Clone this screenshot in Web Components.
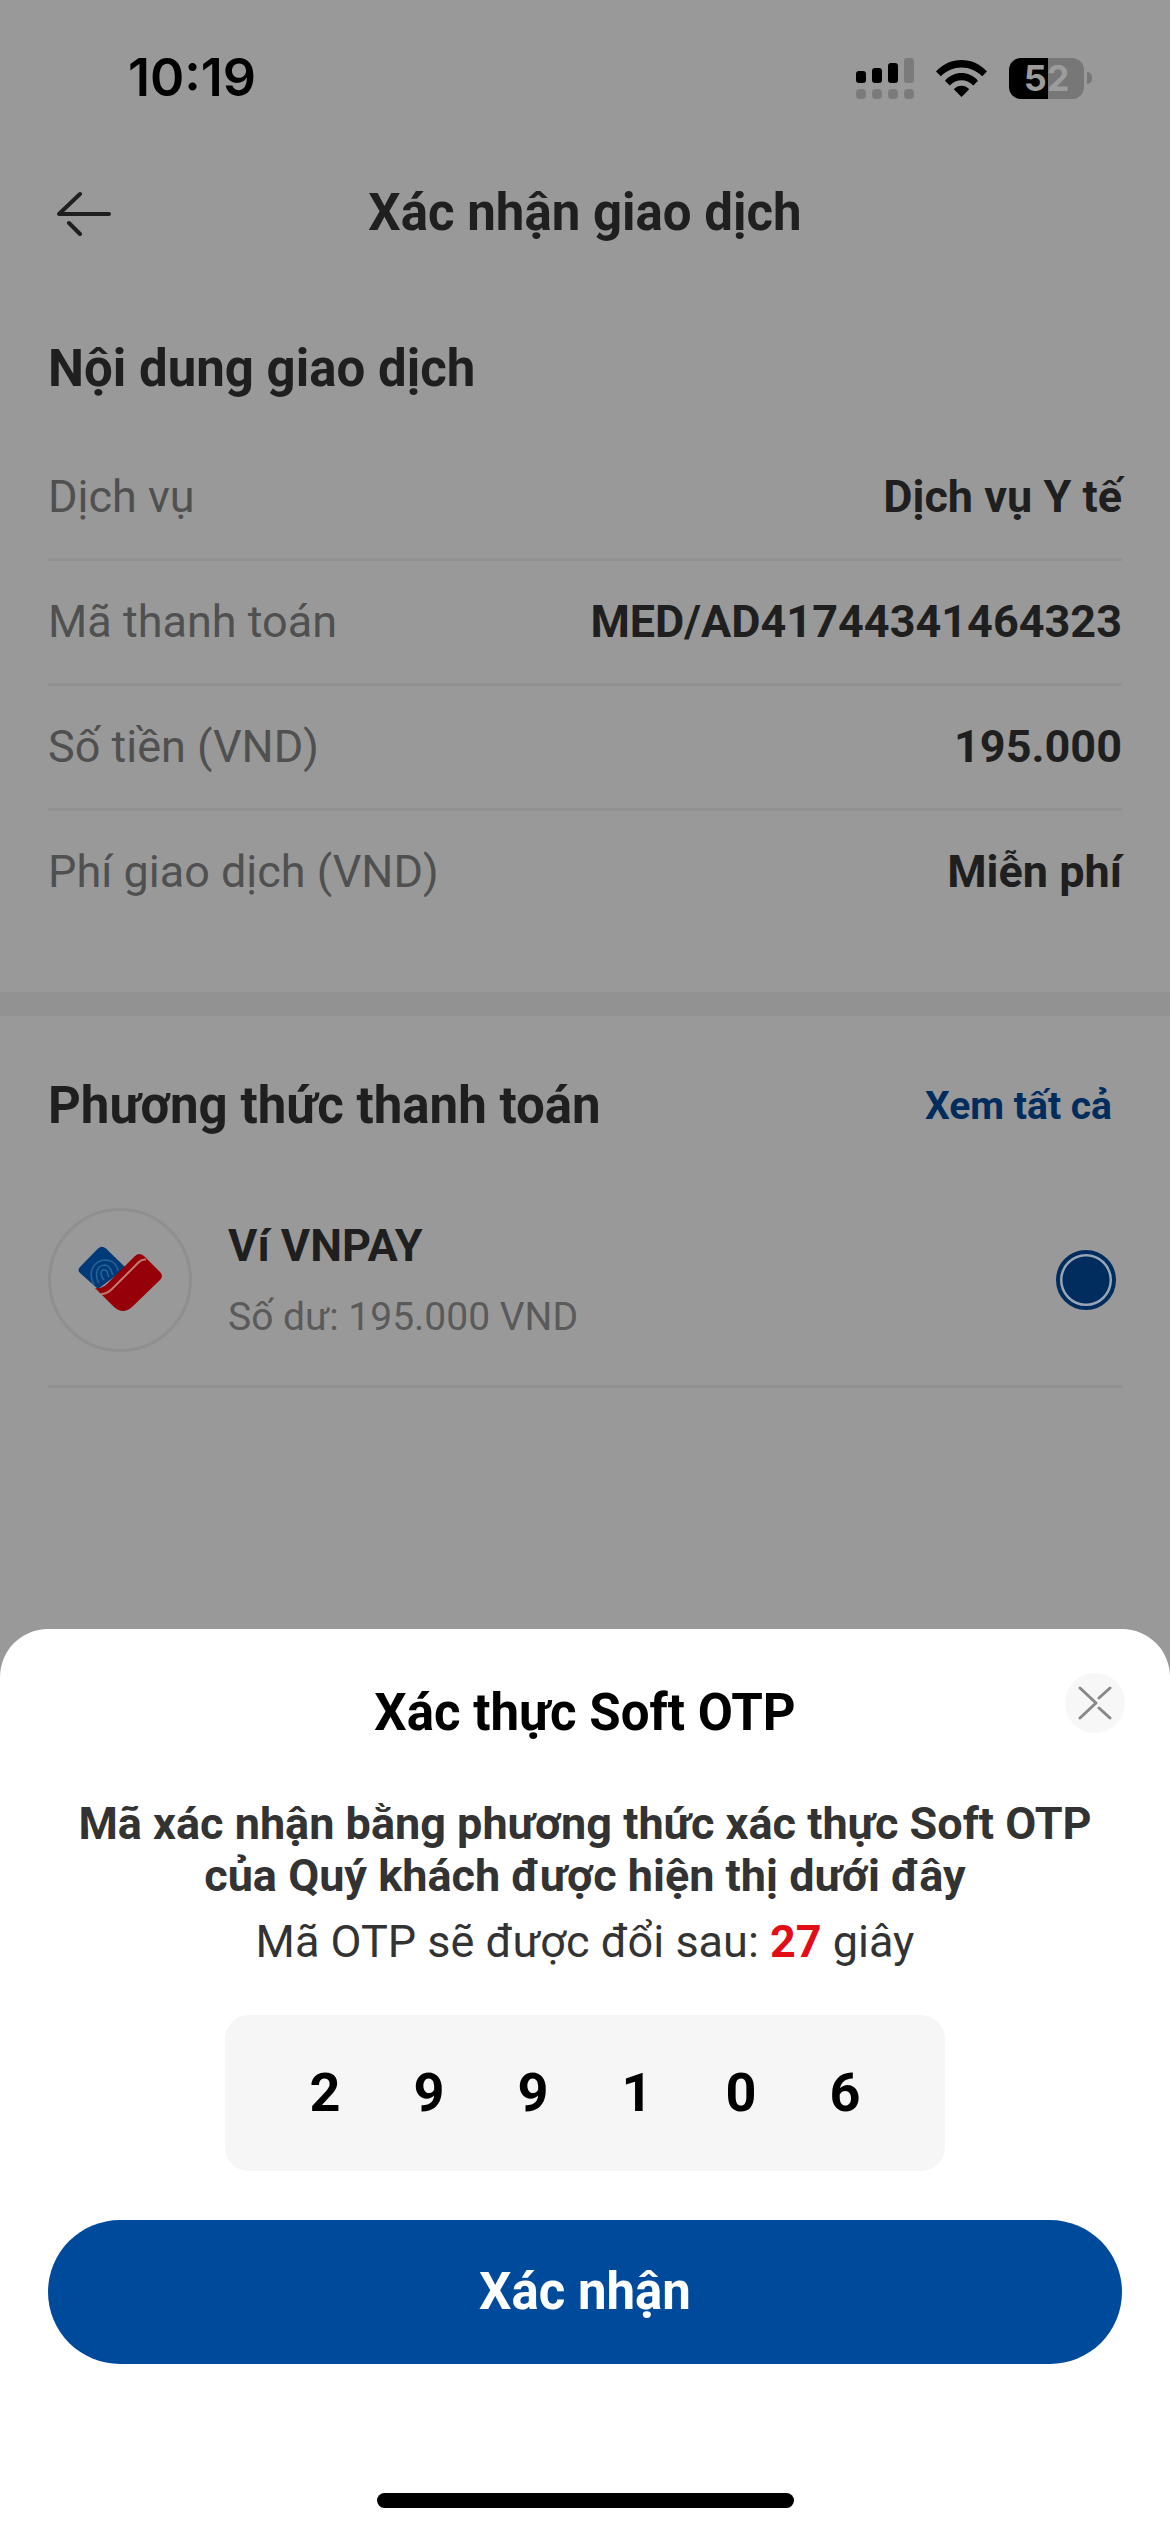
<!DOCTYPE html>
<html lang="vi">
<head>
<meta charset="utf-8">
<meta name="viewport" content="width=device-width, initial-scale=1">
<title>Xác nhận giao dịch</title>
<style>
  :root {
    --page: #999999;
    --ink: #1f1f1f;
    --muted: #505050;
    --line: #919191;
    --navy: #002c5e;
    --blue: #004a9c;
    --gutter: 48px;
  }
  body { margin: 0; background: #fff; font-family: Roboto, "Noto Sans", sans-serif; }
</style>
</head>
<body>
<payment-screen>
  <status-bar slot="top" time="10:19" battery="52"></status-bar>
  <nav-header slot="top">Xác nhận giao dịch</nav-header>
  <detail-section heading="Nội dung giao dịch">
    <detail-row label="Dịch vụ">Dịch vụ Y tế</detail-row>
    <detail-row label="Mã thanh toán">MED/AD41744341464323</detail-row>
    <detail-row label="Số tiền (VND)">195.000</detail-row>
    <detail-row label="Phí giao dịch (VND)" last>Miễn phí</detail-row>
  </detail-section>
  <payment-methods heading="Phương thức thanh toán" link="Xem tất cả">
    <wallet-option name="Ví VNPAY">Số dư: 195.000 VND</wallet-option>
  </payment-methods>
  <otp-sheet slot="sheet" heading="Xác thực Soft OTP" seconds="27" action="Xác nhận">
    Mã xác nhận bằng phương thức xác thực Soft OTP của Quý khách được hiện thị dưới đây
    <otp-code slot="code" value="299106"></otp-code>
  </otp-sheet>
</payment-screen>

<script>
class BaseElement extends HTMLElement {
  connectedCallback() {
    if (this.shadowRoot) return;
    this.attachShadow({ mode: "open" }).innerHTML =
      `<style>:host{display:block;box-sizing:border-box}*{box-sizing:border-box}h1,h2,p{margin:0}${this.css()}</style>${this.html()}`;
  }
  attr(name) { return this.getAttribute(name) || ""; }
}

customElements.define("payment-screen", class extends BaseElement {
  css() { return `
    :host{display:flex;flex-direction:column;min-height:100vh;background:var(--page)}
    main{flex:1}`; }
  html() { return `<slot name="top"></slot><main><slot></slot></main><slot name="sheet"></slot>`; }
});

customElements.define("status-bar", class extends BaseElement {
  css() { return `
    :host{display:flex;align-items:center;justify-content:space-between;height:156px;padding:0 78px 0 128px;font-family:Inter,Roboto,sans-serif;color:#000}
    time{font-size:52px;line-height:60px;font-weight:600}
    .icons{display:flex;align-items:center;gap:22px}
    svg{display:block}
    .power{display:flex;align-items:center;gap:3px}
    .battery{width:75px;height:41px;border-radius:12px;background:linear-gradient(90deg,#000 52%,#777 52%);display:flex;align-items:center;justify-content:center;font-size:36px;line-height:40px;font-weight:700;color:#9c9c9c}
    .nub{width:5px;height:12px;border-radius:0 5px 5px 0;background:#777}`; }
  html() { return `
    <time>${this.attr("time")}</time>
    <div class="icons">
      <svg width="58" height="41" viewBox="0 0 58 41" aria-hidden="true">
        <g fill="#000"><rect x="0" y="13" width="10" height="12" rx="3"/><rect x="16" y="10" width="10" height="15" rx="3"/><rect x="32" y="5" width="10" height="20" rx="3"/></g>
        <g fill="#7b7b7b"><rect x="48" y="0" width="10" height="25" rx="3"/><rect x="0" y="31" width="10" height="10" rx="4"/><rect x="16" y="31" width="10" height="10" rx="4"/><rect x="32" y="31" width="10" height="10" rx="4"/><rect x="48" y="31" width="10" height="10" rx="4"/></g>
      </svg>
      <svg width="51" height="37" viewBox="0 0 51 37" aria-hidden="true">
        <path d="M0 11.5C14-3.8 37-3.8 51 11.5L46.200 16.300C34.500 4.500 16.500 4.500 4.800 16.300Z"/>
        <path d="M9 20.700C18 10.500 33 10.500 42 20.700L37.300 25.400C30.500 18.500 20.500 18.500 13.700 25.400Z"/>
        <path d="M17.800 29.300C22 24.700 29 24.700 33.200 29.300L25.500 37Z"/>
      </svg>
      <div class="power"><div class="battery">${this.attr("battery")}</div><div class="nub"></div></div>
    </div>`; }
});

customElements.define("nav-header", class extends BaseElement {
  css() { return `
    :host{display:grid;grid-template-columns:72px 1fr 72px;align-items:center;padding:12px var(--gutter) 0;height:102px;color:var(--ink)}
    button{border:0;background:none;padding:0 0 0 8px;height:90px;color:inherit;display:flex;align-items:center}
    h1{font-size:51px;line-height:60px;font-weight:700;text-align:center}`; }
  html() { return `
    <button aria-label="Quay lại">
      <svg width="56" height="46" viewBox="0 0 56 46" fill="none" stroke="currentColor" stroke-width="4" stroke-linecap="round" stroke-linejoin="round"><path d="M53 24H3L24 4M13 33L24 44"/></svg>
    </button>
    <h1><slot></slot></h1>`; }
});

customElements.define("detail-section", class extends BaseElement {
  css() { return `
    :host{padding:81px var(--gutter) 56px;border-bottom:24px solid #929292}
    h2{font-size:51px;line-height:60px;font-weight:700;color:var(--ink);margin-bottom:37px}`; }
  html() { return `<h2>${this.attr("heading")}</h2><slot></slot>`; }
});

customElements.define("detail-row", class extends BaseElement {
  css() { return `
    :host{display:flex;align-items:center;justify-content:space-between;height:125px;border-bottom:3px solid var(--line);font-size:45px;line-height:54px}
    :host([last]){border-color:transparent}
    span{color:var(--muted)}
    strong{font-weight:700;color:var(--ink)}`; }
  html() { return `<span>${this.attr("label")}</span><strong><slot></slot></strong>`; }
});

customElements.define("payment-methods", class extends BaseElement {
  css() { return `
    :host{padding:60px var(--gutter) 0}
    header{display:flex;align-items:center;justify-content:space-between;padding-right:10px;margin-bottom:72px}
    h2{font-size:51px;line-height:60px;font-weight:700;color:var(--ink)}
    a{font-size:39px;line-height:48px;font-weight:700;color:var(--navy);text-decoration:none}`; }
  html() { return `<header><h2>${this.attr("heading")}</h2><a href="#">${this.attr("link")}</a></header><slot></slot>`; }
});

customElements.define("wallet-option", class extends BaseElement {
  css() { return `
    :host{border-bottom:3px solid var(--line);padding-bottom:33px}
    label{display:flex;align-items:center;gap:36px;padding-right:6px}
    .logo{width:144px;height:144px;border:3px solid #8f8f8f;border-radius:50%;display:flex;align-items:center;justify-content:center}
    .text{flex:1;display:flex;flex-direction:column;gap:14px}
    strong{font-size:45px;line-height:60px;font-weight:700;color:var(--ink)}
    .text span{font-size:39px;line-height:54px;color:#5a5a5a}
    input{appearance:none;margin:0;width:60px;height:60px;border:4px solid var(--navy);border-radius:50%;background:radial-gradient(circle,var(--navy) 23px,#9aa6b6 24px)}`; }
  html() { return `
    <label>
      <span class="logo">
        <svg width="84" height="68" viewBox="0 0 84 68" aria-hidden="true">
          <path d="M20 2.500Q24 -1 28 2.500L48 22L20 43L2 27Q-1 24 2 21Z" fill="#003a78"/>
          <g fill="none" stroke="#286496" stroke-width="1.500"><path d="M16 39C10 28 14 15 27 14C34 14 39 18 40 25"/><path d="M21 37C16 29 19 19 27 19C34 20 33 27 35 29"/><path d="M26 34C21 28 23 23 27 24C31 25 29 29 31 31"/></g>
          <path d="M57 10Q61 6 66 10L82 26Q86 30 82 34L54 61Q45 69 36 61L17 42Q24 43 29 38Z" fill="#960008"/>
          <path d="M68 13.500Q64 13 61 16L34 43Q29 48 23 48" fill="none" stroke="#c17b70" stroke-width="2"/>
        </svg>
      </span>
      <span class="text"><strong>${this.attr("name")}</strong><span><slot></slot></span></span>
      <input type="radio" name="method" checked>
    </label>`; }
});

customElements.define("otp-code", class extends BaseElement {
  css() { return `
    :host{display:flex;justify-content:center;width:720px;max-width:100%;height:156px;border-radius:24px;background:#f6f6f6;align-items:center}
    span{width:104px;text-align:center;font-size:54px;line-height:60px;font-weight:700;color:#000}`; }
  html() { return [...this.attr("value")].map(d => `<span>${d}</span>`).join(""); }
});

customElements.define("otp-sheet", class extends BaseElement {
  css() { return `
    :host{display:flex;flex-direction:column;background:#fff;border-radius:48px 48px 0 0;padding:44px var(--gutter) 24px;color:#333;font-size:45px;text-align:center}
    header{display:grid;grid-template-columns:60px 1fr 60px;margin:0 -3px 55px}
    h2{grid-column:2;margin-top:10px;font-size:51px;line-height:60px;font-weight:700;color:#000}
    .close{width:60px;height:60px;padding:0;border:0;border-radius:50%;background:#f7f7f7;display:flex;align-items:center;justify-content:center}
    .lead{font-weight:700;line-height:52px;padding:0 24px}
    .timer{margin-top:10px;line-height:60px}
    .timer b{color:#e30d18;font-weight:700}
    .code{display:flex;justify-content:center;margin:43px 0 49px}
    .confirm{height:144px;border:0;border-radius:72px;background:var(--blue);color:#fff;font:700 51px/60px Roboto,"Noto Sans",sans-serif}
    .home{align-self:center;width:417px;max-width:60%;height:15px;border-radius:8px;background:#000;margin-top:129px}`; }
  html() { return `
    <header>
      <h2>${this.attr("heading")}</h2>
      <button class="close" aria-label="Đóng">
        <svg width="34" height="34" viewBox="0 0 34 34" fill="none" stroke="#888" stroke-width="3" stroke-linecap="round" stroke-linejoin="round"><path d="M2 2L18 17L2 32M32 2L21 12M21 22L32 32"/></svg>
      </button>
    </header>
    <p class="lead"><slot></slot></p>
    <p class="timer">Mã OTP sẽ được đổi sau: <b>${this.attr("seconds")}</b> giây</p>
    <div class="code"><slot name="code"></slot></div>
    <button class="confirm">${this.attr("action")}</button>
    <div class="home"></div>`; }
});
</script>
</body>
</html>
